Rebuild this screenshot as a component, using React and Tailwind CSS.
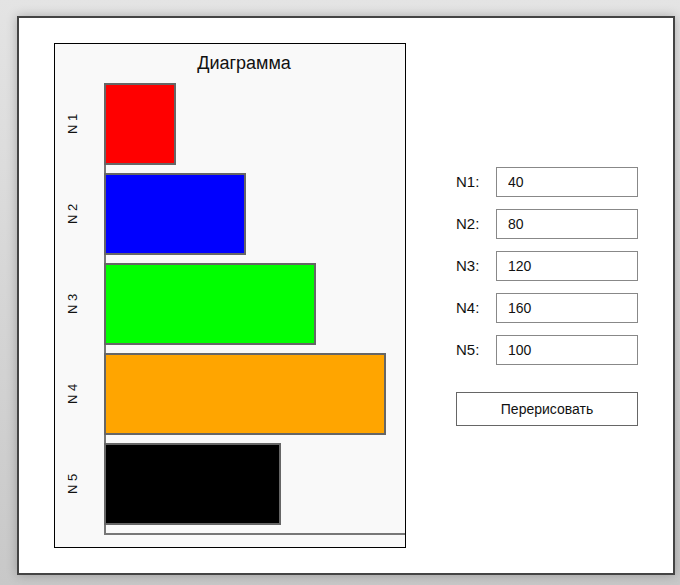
import React, { useState } from 'react'

const COLORS = ['#ff0000', '#0000ff', '#00ff00', '#ffa500', '#000000']

function Chart({ values }) {
  // одна полоса = 80px, шаг 90px, масштаб 1.75px на единицу
  return (
    <div className="w-[352px] h-[505px] border border-black bg-[#f9f9f9]">
      <svg width="350" height="503" className="block">
        <text
          x="189"
          y="25"
          textAnchor="middle"
          fontSize="18"
          fill="#111"
          fontFamily="'Liberation Sans', Arial, sans-serif"
        >
          Диаграмма
        </text>
        <line x1="50" y1="40" x2="50" y2="490" stroke="#777" strokeWidth="2" />
        <line x1="49" y1="490" x2="350" y2="490" stroke="#777" strokeWidth="2" />
        {values.map((v, i) => {
          const y = 40 + i * 90
          return (
            <g key={i}>
              <rect
                x="50"
                y={y}
                width={v * 1.75}
                height="80"
                fill={COLORS[i]}
                stroke="#666"
                strokeWidth="2"
              />
              <text
                x="0"
                y="0"
                transform={`translate(22 ${y + 40}) rotate(-90)`}
                textAnchor="middle"
                fontSize="13"
                fill="#111"
                fontFamily="'Liberation Sans', Arial, sans-serif"
              >
                {`N ${i + 1}`}
              </text>
            </g>
          )
        })}
      </svg>
    </div>
  )
}

export default function App() {
  const [inputs, setInputs] = useState(['40', '80', '120', '160', '100'])
  const [values, setValues] = useState([40, 80, 120, 160, 100])

  const handleChange = (i, val) => {
    const next = [...inputs]
    next[i] = val
    setInputs(next)
  }

  const redraw = () => setValues(inputs.map((s) => Number(s) || 0))

  return (
    <div className="h-[585px] w-[680px] bg-gradient-to-b from-[#e4e4e4] to-[#c8c8c8] pt-[16px] pl-[17px] font-['Liberation_Sans',Arial,sans-serif] text-[#111]">
      <div className="w-[658px] h-[559px] border-2 border-[#444] bg-white shadow-[0_0_10px_rgba(0,0,0,0.25)] flex pl-[35px] pt-[25px]">
        <Chart values={values} />

        <div className="ml-[50px] mt-[124px] flex flex-col">
          <div className="flex flex-col gap-[12px]">
            {inputs.map((val, i) => (
              <div key={i} className="flex items-center">
                <label className="w-[40px] text-[15px]">N{i + 1}:</label>
                <input
                  type="text"
                  value={val}
                  onChange={(e) => handleChange(i, e.target.value)}
                  className="w-[142px] h-[30px] border border-[#888] bg-white px-[11px] text-[14px] outline-none"
                />
              </div>
            ))}
          </div>
          <button
            onClick={redraw}
            className="mt-[27px] w-[182px] h-[34px] border border-[#666] bg-white text-[14px] cursor-pointer"
          >
            Перерисовать
          </button>
        </div>
      </div>
    </div>
  )
}
